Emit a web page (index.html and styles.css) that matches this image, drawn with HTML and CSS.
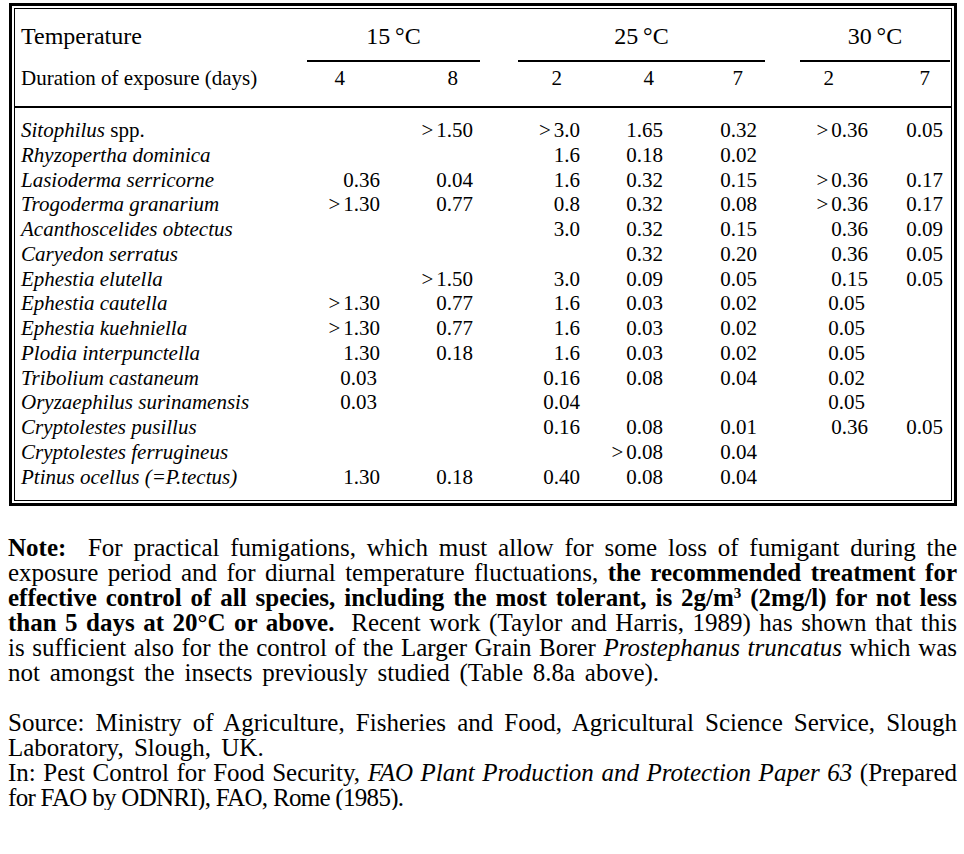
FILE: index.html
```html
<!DOCTYPE html>
<html lang="en">
<head>
<meta charset="utf-8">
<title>Phosphine dosage table</title>
<link rel="stylesheet" href="styles.css">
</head>
<body>
<div class="frame">
  <div class="box">
    <div class="temps">
      <div class="temp-label">Temperature</div>
      <div class="temp t15">15&#8201;°C</div>
      <div class="temp t25">25&#8201;°C</div>
      <div class="temp t30">30&#8201;°C</div>
    </div>
    <div class="grid head">
      <div class="lbl">Duration of exposure (days)</div>
      <div class="num h1">4</div>
      <div class="num h2">8</div>
      <div class="num h3">2</div>
      <div class="num h4">4</div>
      <div class="num h5">7</div>
      <div class="num h6">2</div>
      <div class="num h7">7</div>
    </div>
    <div class="grid rows">
      <div class="row"><div class="lbl"><i>Sitophilus</i> spp.</div><div class="num"></div><div class="num"><span class="gt">&gt;</span>1.50</div><div class="num"><span class="gt">&gt;</span>3.0</div><div class="num">1.65</div><div class="num">0.32</div><div class="num"><span class="gt">&gt;</span>0.36</div><div class="num">0.05</div></div>
      <div class="row"><div class="lbl"><i>Rhyzopertha dominica</i></div><div class="num"></div><div class="num"></div><div class="num">1.6</div><div class="num">0.18</div><div class="num">0.02</div><div class="num"></div><div class="num"></div></div>
      <div class="row"><div class="lbl"><i>Lasioderma serricorne</i></div><div class="num">0.36</div><div class="num">0.04</div><div class="num">1.6</div><div class="num">0.32</div><div class="num">0.15</div><div class="num"><span class="gt">&gt;</span>0.36</div><div class="num">0.17</div></div>
      <div class="row"><div class="lbl"><i>Trogoderma granarium</i></div><div class="num"><span class="gt">&gt;</span>1.30</div><div class="num">0.77</div><div class="num">0.8</div><div class="num">0.32</div><div class="num">0.08</div><div class="num"><span class="gt">&gt;</span>0.36</div><div class="num">0.17</div></div>
      <div class="row"><div class="lbl"><i>Acanthoscelides obtectus</i></div><div class="num"></div><div class="num"></div><div class="num">3.0</div><div class="num">0.32</div><div class="num">0.15</div><div class="num">0.36</div><div class="num">0.09</div></div>
      <div class="row"><div class="lbl"><i>Caryedon serratus</i></div><div class="num"></div><div class="num"></div><div class="num"></div><div class="num">0.32</div><div class="num">0.20</div><div class="num">0.36</div><div class="num">0.05</div></div>
      <div class="row"><div class="lbl"><i>Ephestia elutella</i></div><div class="num"></div><div class="num"><span class="gt">&gt;</span>1.50</div><div class="num">3.0</div><div class="num">0.09</div><div class="num">0.05</div><div class="num">0.15</div><div class="num">0.05</div></div>
      <div class="row"><div class="lbl"><i>Ephestia cautella</i></div><div class="num"><span class="gt">&gt;</span>1.30</div><div class="num">0.77</div><div class="num">1.6</div><div class="num">0.03</div><div class="num">0.02</div><div class="num lo">0.05</div><div class="num"></div></div>
      <div class="row"><div class="lbl"><i>Ephestia kuehniella</i></div><div class="num"><span class="gt">&gt;</span>1.30</div><div class="num">0.77</div><div class="num">1.6</div><div class="num">0.03</div><div class="num">0.02</div><div class="num lo">0.05</div><div class="num"></div></div>
      <div class="row"><div class="lbl"><i>Plodia interpunctella</i></div><div class="num">1.30</div><div class="num">0.18</div><div class="num">1.6</div><div class="num">0.03</div><div class="num">0.02</div><div class="num lo">0.05</div><div class="num"></div></div>
      <div class="row"><div class="lbl"><i>Tribolium castaneum</i></div><div class="num lo">0.03</div><div class="num"></div><div class="num">0.16</div><div class="num">0.08</div><div class="num">0.04</div><div class="num lo">0.02</div><div class="num"></div></div>
      <div class="row"><div class="lbl"><i>Oryzaephilus surinamensis</i></div><div class="num lo">0.03</div><div class="num"></div><div class="num">0.04</div><div class="num"></div><div class="num"></div><div class="num lo">0.05</div><div class="num"></div></div>
      <div class="row"><div class="lbl"><i>Cryptolestes pusillus</i></div><div class="num"></div><div class="num"></div><div class="num">0.16</div><div class="num">0.08</div><div class="num">0.01</div><div class="num">0.36</div><div class="num">0.05</div></div>
      <div class="row"><div class="lbl"><i>Cryptolestes ferrugineus</i></div><div class="num"></div><div class="num"></div><div class="num"></div><div class="num"><span class="gt">&gt;</span>0.08</div><div class="num">0.04</div><div class="num"></div><div class="num"></div></div>
      <div class="row"><div class="lbl"><i>Ptinus ocellus (=P.tectus)</i></div><div class="num">1.30</div><div class="num">0.18</div><div class="num">0.40</div><div class="num">0.08</div><div class="num">0.04</div><div class="num"></div><div class="num"></div></div>
    </div>
  </div>
</div>

<div class="text note">
  <span class="ln j"><b>Note:</b>&nbsp; For practical fumigations, which must allow for some loss of fumigant during the</span>
  <span class="ln j">exposure period and for diurnal temperature fluctuations, <b>the recommended treatment for</b></span>
  <span class="ln j"><b>effective control of all species, including the most tolerant, is 2g/m<sup>3</sup> (2mg/l) for not less</b></span>
  <span class="ln j"><b>than 5 days at 20°C or above.</b>&nbsp; Recent work (Taylor and Harris, 1989) has shown that this</span>
  <span class="ln j">is sufficient also for the control of the Larger Grain Borer <i>Prostephanus truncatus</i> which was</span>
  <span class="ln wide">not amongst the insects previously studied (Table 8.8a above).</span>
</div>

<div class="text source">
  <span class="ln j">Source: Ministry of Agriculture, Fisheries and Food, Agricultural Science Service, Slough</span>
  <span class="ln lab">Laboratory, Slough, UK.</span>
  <span class="ln j">In: Pest Control for Food Security, <i>FAO Plant Production and Protection Paper 63</i> (Prepared</span>
  <span class="ln tight">for FAO by ODNRI), FAO, Rome (1985).</span>
</div>
</body>
</html>
```

FILE: styles.css
```css
html, body {
  margin: 0;
  padding: 0;
  background: #fff;
  color: #000;
}

body {
  font-family: "Liberation Serif", "Times New Roman", serif;
  width: 964px;
}

/* ---------- table frame ---------- */
.frame {
  box-sizing: border-box;
  width: 948px;
  margin: 3px 0 0 9px;
  border: 3px solid #000;
  padding: 2px;
}

.box {
  border: 1px solid #000;
}

/* first header row: temperatures */
.temps {
  display: flex;
  padding-top: 12px;
  font-size: 24px;
  line-height: 30px;
}

.temp-label {
  box-sizing: border-box;
  width: 292px;
  padding-left: 6px;
}

.temp {
  text-align: center;
  padding-bottom: 9px;
  border-bottom: 2px solid #000;
}

.t15 { width: 173px; margin-right: 38px; }
.t25 { width: 247px; margin-right: 35px; }
.t30 { width: 150px; }

/* grid shared by second header row and body rows */
.grid {
  display: grid;
  grid-template-columns: 279px 80px 93px 107px 83px 94px 111px 75px;
  padding: 0 7px 0 6px;
  font-size: 21px;
}

.row {
  display: contents;
}

.head {
  line-height: 25px;
  padding-top: 4px;
  padding-bottom: 15px;
  border-bottom: 2px solid #000;
}

.rows {
  line-height: 24.75px;
  padding-top: 10px;
  padding-bottom: 11px;
}

.lbl {
  white-space: nowrap;
}

.num {
  text-align: right;
  white-space: nowrap;
}

.num.lo {
  padding-right: 3px;
}

.gt {
  margin-right: 3px;
}

.h1 { padding-right: 35px; }
.h2 { padding-right: 15px; }
.h3 { padding-right: 18px; }
.h4 { padding-right: 9px; }
.h5 { padding-right: 14px; }
.h6 { padding-right: 34px; }
.h7 { padding-right: 13px; }

/* ---------- notes below ---------- */
.text {
  box-sizing: border-box;
  width: 957px;
  padding-left: 8px;
  font-size: 25px;
  line-height: 25px;
}

.note {
  margin-top: 29px;
}

.source {
  margin-top: 25px;
}

.ln {
  display: block;
}

.ln.j {
  text-align: justify;
  text-align-last: justify;
}

.ln.wide {
  word-spacing: 3.5px;
}

.ln.lab {
  word-spacing: 4px;
}

.ln.tight {
  letter-spacing: -0.7px;
}

sup {
  font-size: 0.6em;
  line-height: 0;
  vertical-align: 0.55em;
}
```
